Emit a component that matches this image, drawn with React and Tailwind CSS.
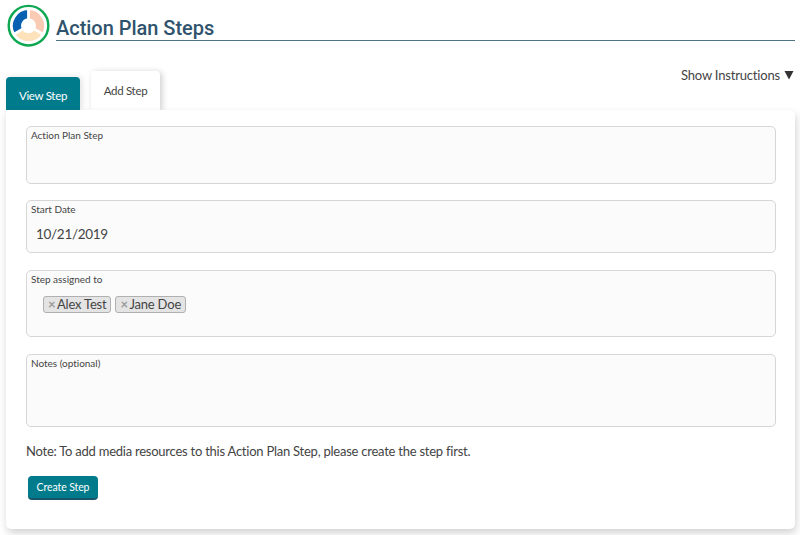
function Logo() {
  return (
    <svg width="44" height="44" viewBox="0 0 44 44" className="shrink-0">
      <circle cx="22.5" cy="21.7" r="19.8" fill="#fff" stroke="#0ca750" strokeWidth="2.4" />
      <g fill="none" strokeWidth="8.2" transform="translate(0.5 -0.3)">
        <path d="M22 10.5A11.5 11.5 0 0 0 12.04 27.75" stroke="#0860b0" />
        <path d="M22 10.5A11.5 11.5 0 0 1 31.96 27.75" stroke="#f9cbb5" />
        <path d="M12.04 27.75A11.5 11.5 0 0 0 31.96 27.75" stroke="#fde2bb" />
      </g>
      <path d="M22.5 21.7V5M22.5 21.7L7.8 30.2M22.5 21.7L37.2 30.2" stroke="#fff" strokeWidth="2.8" />
    </svg>
  );
}

function Field({ label, className, children }) {
  return (
    <div className={`rounded-[5px] border border-[#d6d6d6] bg-[#fbfbfb] px-1 pt-px ${className}`}>
      <div className="text-[10px] leading-[14px] tracking-[-0.02px]">{label}</div>
      {children}
    </div>
  );
}

function Tag({ name }) {
  return (
    <span className="flex h-[17px] items-center rounded-[3px] border border-[#b0b0b0] bg-[#e4e4e4] pl-1 pr-[4px] text-[13px] leading-[15px] tracking-[-0.2px]">
      <span className="mr-[2px] w-[7px] text-[13px] font-bold text-[#999]">×</span>
      {name}
    </span>
  );
}

export default function App() {
  return (
    <div className="flex h-[535px] w-[800px] flex-col overflow-hidden bg-white pl-[6px] pr-[5px] font-['Lato',sans-serif] text-[13px] text-[#444] [font-variant-ligatures:none]">
      <header className="flex h-[52px] pt-[4px]">
        <Logo />
        <h1 className="ml-[6px] h-[37px] flex-1 border-b border-[#4f7389] pt-[11px] font-['Roboto',sans-serif] text-[20px] font-medium leading-[26px] tracking-[-0.03px] text-[#2f536d]">
          Action Plan Steps
        </h1>
      </header>
      <div className="flex h-[58px] shrink-0 items-end">
        <div className="h-[33px] w-[74px] rounded-t-[4px] bg-[#007b8c] pt-[11px] text-center text-[11.5px] leading-[16px] tracking-[-0.3px] text-white shadow-[2px_0_6px_rgba(0,0,0,0.12)]">
          View Step
        </div>
        <div className="ml-[11px] h-[39px] w-[69px] rounded-t-[4px] bg-white pt-[12px] text-center text-[11.5px] leading-[16px] tracking-[-0.3px] shadow-[2px_1px_6px_rgba(0,0,0,0.2)]">
          Add Step
        </div>
        <div className="ml-auto flex h-[43px] items-start">
          <span className="leading-[16px] tracking-[-0.18px]">Show Instructions</span>
          <svg width="10" height="16" viewBox="0 0 10 16" className="ml-[4px] mr-px">
            <path d="M0.5 4H9.5L5 12.5Z" fill="#333" />
          </svg>
        </div>
      </div>
      <main className="relative h-[419px] shrink-0 rounded-[5px] rounded-tl-none bg-white px-[20px] pt-[16px] pr-[19px] shadow-[1px_4px_8px_rgba(0,0,0,0.18)]">
        <Field label="Action Plan Step" className="h-[58px]" />
        <Field label="Start Date" className="mt-[16px] h-[53px]">
          <div className="pl-[5px] pt-[9px] text-[13.5px] leading-[18px] tracking-[-0.3px]">10/21/2019</div>
        </Field>
        <Field label="Step assigned to" className="mt-[17px] h-[67px]">
          <div className="flex gap-[4px] pl-[12px] pt-[10px]">
            <Tag name="Alex Test" />
            <Tag name="Jane Doe" />
          </div>
        </Field>
        <Field label="Notes (optional)" className="mt-[17px] h-[73px]" />
        <p className="mt-[16px] leading-[16px] tracking-[-0.24px]">
          Note: To add media resources to this Action Plan Step, please create the step first.
        </p>
        <button className="ml-[2px] mt-[17px] block h-[24px] w-[70px] rounded-[4px] border-b-2 border-[#17546a] bg-[#007b8c] text-[10.5px] leading-[22px] tracking-[-0.1px] text-white">
          Create Step
        </button>
      </main>
    </div>
  );
}
